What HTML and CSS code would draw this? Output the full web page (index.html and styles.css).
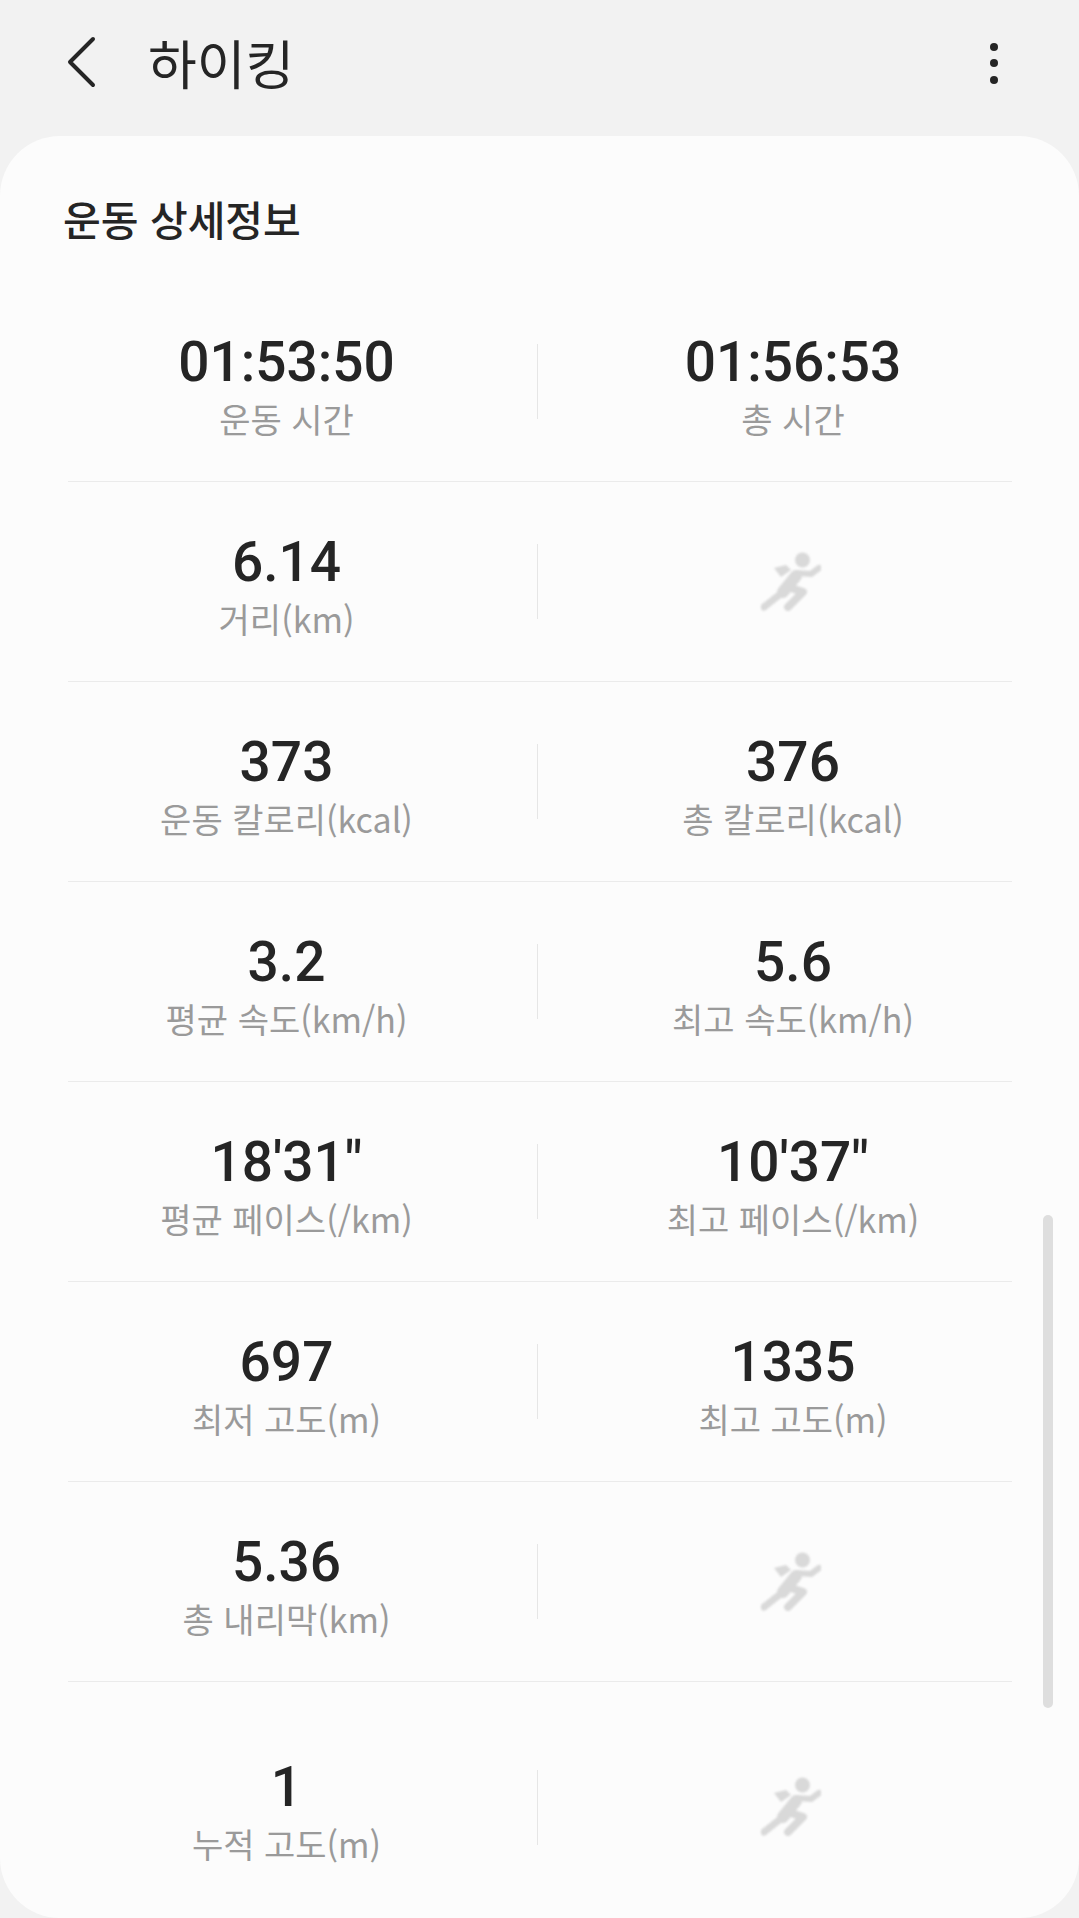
FILE: index.html
```html
<!DOCTYPE html>
<html lang="ko">
<head>
    <meta charset="UTF-8">
    <meta name="viewport" content="width=device-width, initial-scale=1.0">
    <title>하이킹</title>
    <link rel="stylesheet" href="styles.css">
</head>
<body>
    <svg class="defs" width="0" height="0">
        <symbol id="runner" viewBox="40 22 60 60">
            <circle cx="81.5" cy="30" r="7.5" fill="currentColor"/>
            <path d="M53 38 L65 35 L70 40 L60 47 Z" fill="currentColor"/>
            <path d="M75 46 L62 62" fill="none" stroke="currentColor" stroke-width="12" stroke-linecap="round"/>
            <path d="M62 62 L43 77" fill="none" stroke="currentColor" stroke-width="7" stroke-linecap="round"/>
            <path d="M76 43 L90 44 L98 38" fill="none" stroke="currentColor" stroke-width="6" stroke-linecap="round" stroke-linejoin="round"/>
            <path d="M70 58 L82 62 L67 77" fill="none" stroke="currentColor" stroke-width="8" stroke-linecap="round" stroke-linejoin="round"/>
        </symbol>
    </svg>

    <header class="appbar">
        <svg class="back" width="30" height="56" viewBox="0 0 30 56">
            <path d="M26 4 L3 27 L26 50" fill="none" stroke="#252525" stroke-width="4" stroke-linecap="round" stroke-linejoin="round"/>
        </svg>
        <h1>하이킹</h1>
        <div class="more"><span></span><span></span><span></span></div>
    </header>

    <main class="card">
        <h2>운동 상세정보</h2>

        <div class="row">
            <div class="cell left"><div class="value">01:53:50</div><div class="label">운동 시간</div></div>
            <div class="cell right"><div class="value">01:56:53</div><div class="label">총 시간</div></div>
        </div>
        <div class="row">
            <div class="cell left"><div class="value">6.14</div><div class="label">거리(km)</div></div>
            <div class="cell right"><svg class="runner"><use href="#runner"/></svg></div>
        </div>
        <div class="row">
            <div class="cell left"><div class="value">373</div><div class="label">운동 칼로리(kcal)</div></div>
            <div class="cell right"><div class="value">376</div><div class="label">총 칼로리(kcal)</div></div>
        </div>
        <div class="row">
            <div class="cell left"><div class="value">3.2</div><div class="label">평균 속도(km/h)</div></div>
            <div class="cell right"><div class="value">5.6</div><div class="label">최고 속도(km/h)</div></div>
        </div>
        <div class="row">
            <div class="cell left"><div class="value">18'31"</div><div class="label">평균 페이스(/km)</div></div>
            <div class="cell right"><div class="value">10'37"</div><div class="label">최고 페이스(/km)</div></div>
        </div>
        <div class="row">
            <div class="cell left"><div class="value">697</div><div class="label">최저 고도(m)</div></div>
            <div class="cell right"><div class="value">1335</div><div class="label">최고 고도(m)</div></div>
        </div>
        <div class="row">
            <div class="cell left"><div class="value">5.36</div><div class="label">총 내리막(km)</div></div>
            <div class="cell right"><svg class="runner"><use href="#runner"/></svg></div>
        </div>
        <div class="row last">
            <div class="cell left"><div class="value">1</div><div class="label">누적 고도(m)</div></div>
            <div class="cell right"><svg class="runner"><use href="#runner"/></svg></div>
        </div>

        <div class="scrollbar"></div>
    </main>
</body>
</html>
```

FILE: styles.css
```css
html, body {
    height: 100%;
}
body {
    background-color: #f2f2f2;
    color: #252525;
    font-family: 'Roboto', 'Noto Sans CJK KR', sans-serif;
    margin: 0;
    height: 1918px;
    overflow: hidden;
    display: flex;
    flex-direction: column;
}
.defs {
    position: absolute;
}
.appbar {
    height: 136px;
    flex: none;
    display: flex;
    align-items: center;
    padding: 0 81px 0 67px;
    box-sizing: border-box;
}
.back {
    flex: none;
    margin-top: -11px;
}
h1 {
    font-family: 'Noto Sans CJK KR', sans-serif;
    font-size: 53px;
    font-weight: 400;
    margin: -12px 0 0 51px;
    flex: 1;
}
.more {
    display: flex;
    flex-direction: column;
    gap: 8.5px;
    margin-top: -10px;
}
.more span {
    width: 8px;
    height: 8px;
    border-radius: 50%;
    background-color: #252525;
}
.card {
    position: relative;
    flex: 1;
    background-color: #fcfcfc;
    border-radius: 60px;
    padding: 0 67px 0 68px;
    overflow: hidden;
}
h2 {
    font-family: 'Noto Sans CJK KR', sans-serif;
    font-size: 41px;
    font-weight: 500;
    line-height: 41px;
    height: 146px;
    margin: 0 0 0 -5px;
    box-sizing: border-box;
    padding-top: 62px;
}
.row {
    height: 200px;
    box-sizing: border-box;
    display: flex;
    align-items: center;
    border-bottom: 1px solid #ebebeb;
}
.row.last {
    height: 250px;
    border-bottom: none;
}
.cell {
    text-align: center;
    height: 75px;
    display: flex;
    flex-direction: column;
    align-items: center;
    justify-content: center;
    box-sizing: border-box;
}
.cell.left {
    flex: none;
    width: 470px;
    border-right: 1px solid #e6e6e6;
    padding-right: 32px;
}
.cell.right {
    flex: 1;
    padding-left: 36px;
}
.value {
    font-size: 55px;
    font-weight: 500;
    line-height: 60px;
    color: #252525;
    margin-top: -9px;
    margin-bottom: -2px;
}
.label {
    font-family: 'Noto Sans CJK KR', 'Roboto', sans-serif;
    font-size: 34px;
    line-height: 58px;
    color: #9a9a9a;
    margin-bottom: -25px;
}
.runner {
    width: 60px;
    height: 60px;
    color: #d9d9d9;
    filter: blur(0.8px);
    margin-right: 4px;
}
.scrollbar {
    position: absolute;
    top: 1079px;
    right: 26px;
    width: 10px;
    height: 493px;
    border-radius: 5px;
    background-color: #dedede;
}
```
